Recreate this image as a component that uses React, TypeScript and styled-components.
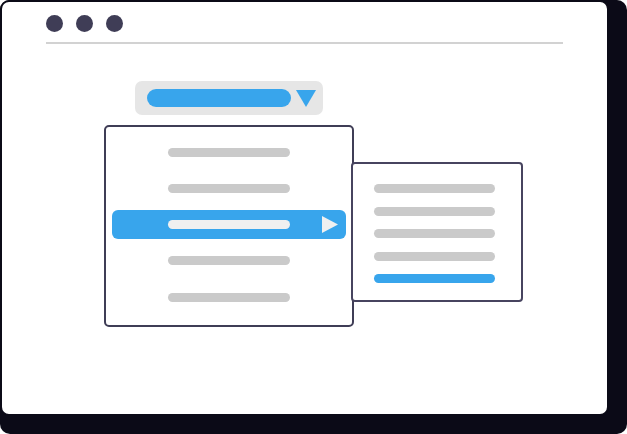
import React from 'react';
import styled, { createGlobalStyle } from 'styled-components';

const GlobalStyle = createGlobalStyle`
  html, body {
    margin: 0;
    padding: 0;
    background: #ffffff;
    font-family: 'Liberation Sans', Arial, sans-serif;
  }
`;

const Stage = styled.div`
  width: 627px;
  height: 434px;
  background: #0b0a17;
  border-radius: 10px;
`;

const Window = styled.div`
  box-sizing: border-box;
  width: 609px;
  height: 416px;
  background: #ffffff;
  border: 2px solid #0b0a17;
  border-radius: 9px;
  padding: 13px 44px 0;
`;

const Dots = styled.div`
  display: flex;
  gap: 13px;
`;

const Dot = styled.span`
  width: 17px;
  height: 17px;
  border-radius: 50%;
  background: #3f3d56;
`;

const Divider = styled.div`
  height: 2px;
  margin-top: 10px;
  background: #d2d2d2;
`;

const Content = styled.div`
  display: flex;
  flex-direction: column;
  align-items: flex-start;
  padding-top: 37px;
`;

const Select = styled.div`
  display: flex;
  align-items: center;
  gap: 5px;
  box-sizing: border-box;
  width: 188px;
  height: 34px;
  margin-left: 89px;
  padding-left: 12px;
  background: #e6e6e6;
  border-radius: 7px;
`;

const Bar = styled.span<{ width: number; tone: string }>`
  display: block;
  flex: none;
  width: ${({ width }) => width}px;
  height: ${({ width }) => (width > 130 ? 18 : 9)}px;
  border-radius: 9px;
  background: ${({ tone }) => tone};
`;

const Menu = styled.div`
  position: relative;
  box-sizing: border-box;
  width: 250px;
  height: 202px;
  margin: 10px 0 0 58px;
  padding: 10.5px 0 13.5px;
  border: 2px solid #3f3d56;
  border-radius: 5px;
  display: flex;
  flex-direction: column;
  gap: 7.25px;
`;

const MenuRow = styled.div<{ active?: boolean }>`
  display: flex;
  align-items: center;
  height: 29px;
  margin: 0 6px;
  padding: 0 8px 0 56px;
  border-radius: 6px;
  background: ${({ active }) => (active ? '#38a5ec' : 'transparent')};
`;

const Arrow = styled.svg`
  margin-left: auto;
  display: block;
`;

const Submenu = styled.div`
  position: absolute;
  left: 245px;
  top: 35px;
  box-sizing: border-box;
  width: 172px;
  height: 140px;
  padding: 20px 0 0 21px;
  background: #ffffff;
  border: 2px solid #47445f;
  border-radius: 4px;
  display: flex;
  flex-direction: column;
  gap: 13.6px;
`;

const GREY = '#cacaca';
const BLUE = '#38a5ec';
const LIGHT = '#f0f0f0';

const menuItems = [false, false, true, false, false];
const subItems = [GREY, GREY, GREY, GREY, BLUE];

export default function App() {
  return (
    <>
      <GlobalStyle />
      <Stage>
        <Window>
          <Dots>
            <Dot />
            <Dot />
            <Dot />
          </Dots>
          <Divider />
          <Content>
            <Select>
              <Bar width={144} tone={BLUE} />
              <svg width="20" height="17" viewBox="0 0 20 17">
                <polygon points="0,0 20,0 10,17" fill={BLUE} />
              </svg>
            </Select>
            <Menu>
              {menuItems.map((active, i) => (
                <MenuRow key={i} active={active}>
                  <Bar width={122} tone={active ? LIGHT : GREY} />
                  {active && (
                    <Arrow width="16" height="17" viewBox="0 0 16 17">
                      <polygon points="0,0 16,8.5 0,17" fill={LIGHT} />
                    </Arrow>
                  )}
                </MenuRow>
              ))}
              <Submenu>
                {subItems.map((tone, i) => (
                  <Bar key={i} width={121} tone={tone} />
                ))}
              </Submenu>
            </Menu>
          </Content>
        </Window>
      </Stage>
    </>
  );
}
